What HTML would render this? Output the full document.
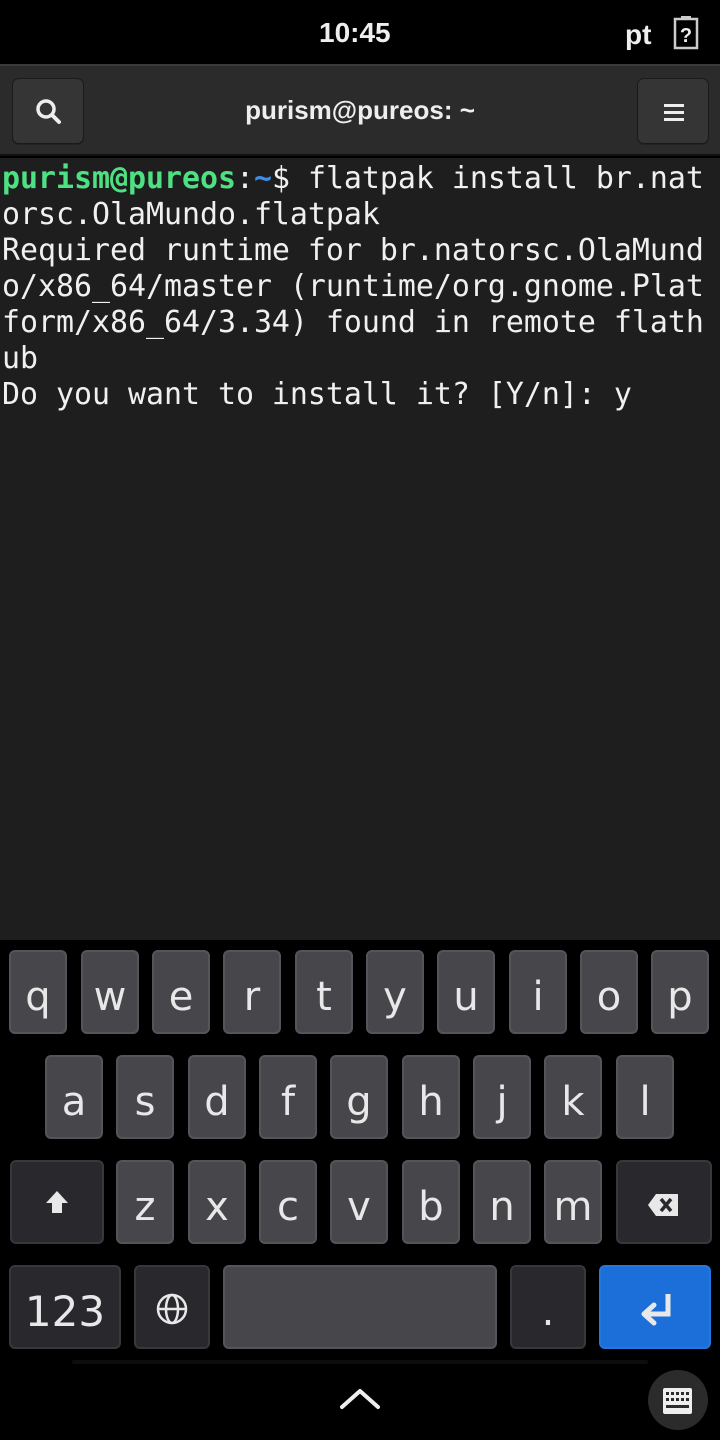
<!DOCTYPE html>
<html><head><meta charset="utf-8"><style>
*{margin:0;padding:0;box-sizing:border-box}
body{width:720px;height:1440px;background:#000;position:relative;overflow:hidden;font-family:"Liberation Sans",sans-serif}
.abs{position:absolute}
#status{left:0;top:0;width:720px;height:64px;background:#000;color:#eee;font-weight:bold;font-size:28px}
#hdr{left:0;top:64px;width:720px;height:92px;background:#2b2b2b;border-top:2px solid #3a3a3a;border-bottom:2px solid #111}
.hb{position:absolute;top:12px;width:72px;height:66px;background:#353535;border:1px solid #1a1a1a;border-radius:7px;box-shadow:0 1px 0 #222}
#term{left:0;top:158px;width:720px;height:782px;background:#1e1e1e;font-family:"DejaVu Sans Mono","Liberation Mono",monospace;font-size:29.9px;line-height:36px;color:#f0f0f0;white-space:pre;padding-left:2px;padding-top:3px}
.k{position:absolute;width:58px;height:84px;background:#47464b;border:2px solid #55545a;border-radius:6px;color:#e8e8e8;font-size:40px;text-align:center;line-height:90px;font-family:"DejaVu Sans","Liberation Sans",sans-serif}
.d{background:#29282d;border-color:#38373c}
</style></head><body>
<div id="status" class="abs">
 <div class="abs" style="left:319px;top:17px">10:45</div>
 <div class="abs" style="left:625px;top:19px">pt</div>
 <svg class="abs" style="left:672px;top:14px" width="28" height="36" viewBox="0 0 28 36"><rect x="3" y="5" width="22" height="29" fill="none" stroke="#ccc" stroke-width="2.5"/><rect x="9" y="2" width="10" height="4" fill="#ccc"/><text x="14" y="28" fill="#eee" font-size="20" font-weight="bold" text-anchor="middle" font-family="Liberation Sans">?</text></svg>
</div>
<div id="hdr" class="abs">
 <div class="hb" style="left:12px"><svg width="72" height="66" viewBox="0 0 72 66"><circle cx="33" cy="30" r="8" fill="none" stroke="#eee" stroke-width="3.5"/><line x1="39" y1="36" x2="46" y2="43" stroke="#eee" stroke-width="4" stroke-linecap="round"/></svg></div>
 <div class="abs" style="left:0;width:720px;top:29px;text-align:center;color:#eee;font-weight:bold;font-size:26px">purism@pureos: ~</div>
 <div class="hb" style="left:637px"><svg width="72" height="66" viewBox="0 0 72 66"><rect x="26" y="25" width="20" height="3" fill="#eee"/><rect x="26" y="32" width="20" height="3" fill="#eee"/><rect x="26" y="39" width="20" height="3" fill="#eee"/></svg></div>
</div>
<div id="term" class="abs"><span style="color:#4ee183;font-weight:bold">purism@pureos</span>:<span style="color:#3d8ee8;font-weight:bold">~</span>$ flatpak install br.nat
orsc.OlaMundo.flatpak
Required runtime for br.natorsc.OlaMund
o/x86_64/master (runtime/org.gnome.Plat
form/x86_64/3.34) found in remote flath
ub
Do you want to install it? [Y/n]: y</div>

<div class="k" style="left:9px;top:950px">q</div>
<div class="k" style="left:81px;top:950px">w</div>
<div class="k" style="left:152px;top:950px">e</div>
<div class="k" style="left:223px;top:950px">r</div>
<div class="k" style="left:295px;top:950px">t</div>
<div class="k" style="left:366px;top:950px">y</div>
<div class="k" style="left:437px;top:950px">u</div>
<div class="k" style="left:509px;top:950px">i</div>
<div class="k" style="left:580px;top:950px">o</div>
<div class="k" style="left:651px;top:950px">p</div>

<div class="k" style="left:45px;top:1055px">a</div>
<div class="k" style="left:116px;top:1055px">s</div>
<div class="k" style="left:188px;top:1055px">d</div>
<div class="k" style="left:259px;top:1055px">f</div>
<div class="k" style="left:330px;top:1055px">g</div>
<div class="k" style="left:402px;top:1055px">h</div>
<div class="k" style="left:473px;top:1055px">j</div>
<div class="k" style="left:544px;top:1055px">k</div>
<div class="k" style="left:616px;top:1055px">l</div>

<div class="k d" style="left:10px;top:1160px;width:94px"><svg width="90" height="80" viewBox="0 0 90 80"><path d="M45 29 L56 41 L50 41 L50 51 L40 51 L40 41 L34 41 Z" fill="#e8e8e8"/></svg></div>
<div class="k" style="left:116px;top:1160px">z</div>
<div class="k" style="left:188px;top:1160px">x</div>
<div class="k" style="left:259px;top:1160px">c</div>
<div class="k" style="left:330px;top:1160px">v</div>
<div class="k" style="left:402px;top:1160px">b</div>
<div class="k" style="left:473px;top:1160px">n</div>
<div class="k" style="left:544px;top:1160px">m</div>
<div class="k d" style="left:616px;top:1160px;width:96px"><svg width="92" height="80" viewBox="0 0 92 80"><path d="M38 32 L60 32 L60 54 L38 54 L30 43 Z" fill="#e8e8e8"/><path d="M43 37 L53 49 M53 37 L43 49" stroke="#29282d" stroke-width="3.5"/></svg></div>

<div class="k d" style="left:9px;top:1265px;width:112px;font-size:42px">123</div>
<div class="k d" style="left:134px;top:1265px;width:76px"><svg width="72" height="80" viewBox="0 0 72 80"><circle cx="36" cy="42" r="14" fill="none" stroke="#e8e8e8" stroke-width="2.5"/><ellipse cx="36" cy="42" rx="6" ry="14" fill="none" stroke="#e8e8e8" stroke-width="2.5"/><line x1="22" y1="42" x2="50" y2="42" stroke="#e8e8e8" stroke-width="2.5"/></svg></div>
<div class="k" style="left:223px;top:1265px;width:274px"></div>
<div class="k d" style="left:510px;top:1265px;width:76px">.</div>
<div class="k" style="left:599px;top:1265px;width:112px;background:#1c6fd8;border-color:#2378e0"><svg width="108" height="80" viewBox="0 0 108 80"><path d="M67 27 L67 47 L46 47" fill="none" stroke="#e8e8e8" stroke-width="5"/><path d="M53 38 L43 47 L53 56" fill="none" stroke="#e8e8e8" stroke-width="5" stroke-linejoin="round" stroke-linecap="round"/></svg></div>

<div class="abs" style="left:72px;top:1360px;width:576px;height:4px;background:#0d0d0d;border-radius:4px"></div>
<svg class="abs" style="left:330px;top:1380px" width="60" height="40" viewBox="0 0 60 40"><path d="M12 27 L30 11 L48 27" fill="none" stroke="#eee" stroke-width="4" stroke-linecap="round" stroke-linejoin="round"/></svg>
<div class="abs" style="left:648px;top:1370px;width:60px;height:60px;border-radius:30px;background:#2b2b2b"></div>
<svg class="abs" style="left:648px;top:1370px" width="60" height="60" viewBox="0 0 60 60"><rect x="15" y="18" width="29" height="26" rx="2" fill="#eee"/><g fill="#2b2b2b"><rect x="18" y="22" width="3" height="3"/><rect x="23" y="22" width="3" height="3"/><rect x="28" y="22" width="3" height="3"/><rect x="33" y="22" width="3" height="3"/><rect x="38" y="22" width="3" height="3"/><rect x="18" y="28" width="3" height="3"/><rect x="23" y="28" width="3" height="3"/><rect x="28" y="28" width="3" height="3"/><rect x="33" y="28" width="3" height="3"/><rect x="38" y="28" width="3" height="3"/><rect x="18" y="35" width="23" height="3"/></g></svg>
</body></html>
